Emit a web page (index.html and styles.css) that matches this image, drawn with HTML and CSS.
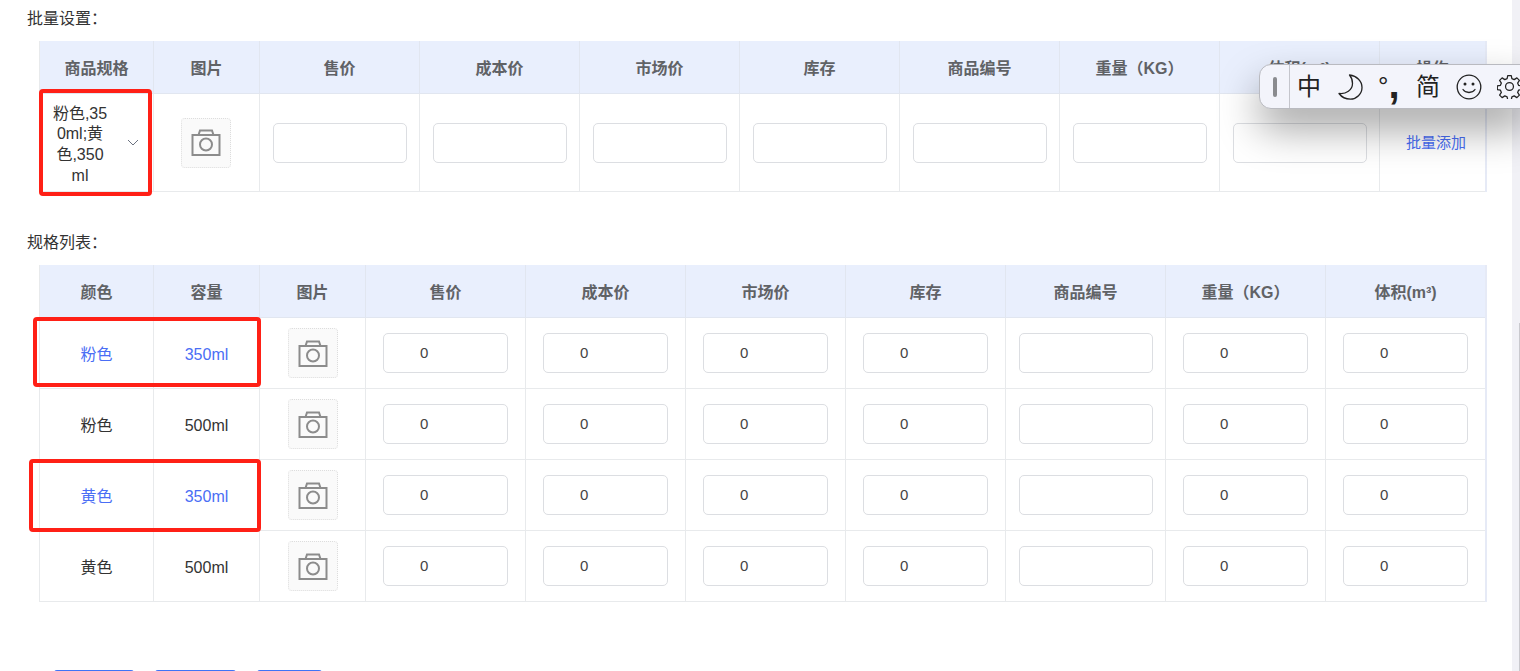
FILE: index.html
```html
<!DOCTYPE html>
<html lang="zh">
<head>
<meta charset="utf-8">
<title>批量设置</title>
<link rel="stylesheet" href="styles.css">
</head>
<body>
<div class="page">
  <main class="content">
    <div class="label first">批量设置：</div>
    <table class="grid">
      <colgroup><col class="c114"><col class="c106"><col class="c160"><col class="c160"><col class="c160"><col class="c160"><col class="c160"><col class="c160"><col class="c160"><col class="c105"></colgroup>
      <thead><tr><th>商品规格</th><th>图片</th><th>售价</th><th>成本价</th><th>市场价</th><th>库存</th><th>商品编号</th><th>重量（KG）</th><th>体积(m³)</th><th>操作</th></tr></thead>
      <tbody>
        <tr class="batch">
          <td><div class="select"><span class="select-text">粉色,350ml;黄色,350ml</span><svg class="chev" viewBox="0 0 12 7" width="12" height="7"><path d="M1 1l5 5 5-5" fill="none" stroke="#6b7280" stroke-width="1"/></svg></div></td>
          <td><div class="upload"><svg class="cam" viewBox="0 0 30 27"><use href="#camera"/></svg></div></td>
          <td><div class="field wide"></div></td>
          <td><div class="field wide"></div></td>
          <td><div class="field wide"></div></td>
          <td><div class="field wide"></div></td>
          <td><div class="field wide"></div></td>
          <td><div class="field wide"></div></td>
          <td><div class="field wide"></div></td>
          <td><a class="link">批量添加</a></td>
        </tr>
      </tbody>
    </table>

    <div class="label second">规格列表：</div>
    <table class="grid">
      <colgroup><col class="c114"><col class="c106"><col class="c106"><col class="c160"><col class="c160"><col class="c160"><col class="c160"><col class="c160"><col class="c160"><col class="c159"></colgroup>
      <thead><tr><th>颜色</th><th>容量</th><th>图片</th><th>售价</th><th>成本价</th><th>市场价</th><th>库存</th><th>商品编号</th><th>重量（KG）</th><th>体积(m³)</th></tr></thead>
      <tbody>
        <tr class="row hl"><td>粉色</td><td>350ml</td><td><div class="upload small"><svg class="cam" viewBox="0 0 30 27"><use href="#camera"/></svg></div></td><td><div class="field num">0</div></td><td><div class="field num">0</div></td><td><div class="field num">0</div></td><td><div class="field num">0</div></td><td><div class="field wide"></div></td><td><div class="field num">0</div></td><td><div class="field num">0</div></td></tr>
        <tr class="row"><td>粉色</td><td>500ml</td><td><div class="upload small"><svg class="cam" viewBox="0 0 30 27"><use href="#camera"/></svg></div></td><td><div class="field num">0</div></td><td><div class="field num">0</div></td><td><div class="field num">0</div></td><td><div class="field num">0</div></td><td><div class="field wide"></div></td><td><div class="field num">0</div></td><td><div class="field num">0</div></td></tr>
        <tr class="row hl"><td>黄色</td><td>350ml</td><td><div class="upload small"><svg class="cam" viewBox="0 0 30 27"><use href="#camera"/></svg></div></td><td><div class="field num">0</div></td><td><div class="field num">0</div></td><td><div class="field num">0</div></td><td><div class="field num">0</div></td><td><div class="field wide"></div></td><td><div class="field num">0</div></td><td><div class="field num">0</div></td></tr>
        <tr class="row"><td>黄色</td><td>500ml</td><td><div class="upload small"><svg class="cam" viewBox="0 0 30 27"><use href="#camera"/></svg></div></td><td><div class="field num">0</div></td><td><div class="field num">0</div></td><td><div class="field num">0</div></td><td><div class="field num">0</div></td><td><div class="field wide"></div></td><td><div class="field num">0</div></td><td><div class="field num">0</div></td></tr>
      </tbody>
    </table>

    <div class="actions">
      <button class="btn b80">上一步</button>
      <button class="btn b81">下一步</button>
      <button class="btn b65">提交</button>
    </div>
  </main>
  <div class="scrollbar"><div class="thumb"></div></div>
</div>

<div class="mark m1"></div>
<div class="mark m2"></div>
<div class="mark m3"></div>

<div class="ime">
  <div class="ime-grip"><span class="grip-bar"></span></div>
  <div class="ime-items">
    <span class="ime-zh">中</span>
    <svg class="ime-moon" viewBox="0 0 25 26" width="25" height="26"><path d="M11.500 1C19 2 24 7 24 13.500 24 20 18.500 25.200 12.500 25.200 7.500 25.200 3.500 23 1 19.500 8 20.500 14.500 16 14.500 9.500 14.500 6.300 13.500 3.300 11.500 1z" fill="none" stroke="#222" stroke-width="1.300" stroke-linejoin="round"/></svg>
    <span class="ime-punct"><i class="deg">°</i><b class="comma">,</b></span>
    <span class="ime-zh jian">简</span>
    <svg class="ime-smile" viewBox="0 0 26 26" width="26" height="26"><circle cx="13" cy="13" r="11.800" fill="none" stroke="#222" stroke-width="1.300"/><circle cx="9" cy="10" r="1.500" fill="#222"/><circle cx="17" cy="10" r="1.500" fill="#222"/><path d="M7 15.500c2.800 4 9.200 4 12 0" fill="none" stroke="#222" stroke-width="1.300" stroke-linecap="round"/></svg>
    <svg class="ime-gear" viewBox="0 0 24 24" width="25" height="25"><path d="M10.300 1.500h3.400l.6 3 2.200.9 2.600-1.700 2.400 2.400-1.700 2.600.9 2.200 3 .6v3.400l-3 .6-.9 2.200 1.700 2.600-2.400 2.400-2.600-1.700-2.200.9-.6 3h-3.400l-.6-3-2.200-.9-2.600 1.700-2.400-2.400 1.700-2.600-.9-2.200-3-.6v-3.400l3-.6.9-2.200-1.700-2.600 2.400-2.400 2.600 1.700 2.200-.9z" fill="none" stroke="#222" stroke-width="1.200" stroke-linejoin="round"/><circle cx="12" cy="12" r="3.800" fill="none" stroke="#222" stroke-width="1.200"/></svg>
  </div>
</div>

<svg class="defs" width="0" height="0">
  <symbol id="camera" viewBox="0 0 30 27">
    <path d="M1.500 6h27v20h-27zM7.500 6l1.500-4.500h12L22.500 6" fill="none" stroke="#8c8c8c" stroke-width="2"/>
    <circle cx="15" cy="15.500" r="6" fill="none" stroke="#8c8c8c" stroke-width="2"/>
  </symbol>
</svg>
</body>
</html>
```

FILE: styles.css
```css
* { box-sizing: border-box; }
html, body { margin: 0; height: 671px; overflow: hidden; background: #fff; }
body {
  font-family: "Liberation Sans", "Noto Sans CJK SC", sans-serif;
  color: #333;
  position: relative;
}
.page { display: flex; height: 671px; overflow: hidden; }
.content { flex: 1; padding-left: 27px; min-width: 0; }
.label { font-size: 16px; line-height: 20px; color: #333; }
.label.first { margin-top: 9px; }
.label.second { margin-top: 41px; }
.grid {
  margin: 12px 0 0 12px;
  width: 1448px;
  table-layout: fixed;
  border-collapse: separate;
  border-spacing: 0;
  border-left: 1px solid #e8eaec;
  border-right: 2px solid #e6eaf6;
}
.c105 { width: 105px; }
.c114 { width: 114px; }
.c106 { width: 106px; }
.c159 { width: 159px; }
.c160 { width: 160px; }
.grid th {
  height: 53px;
  background: #e9effd;
  color: #606266;
  font-size: 16px;
  font-weight: 700;
  text-align: center;
  border-right: 1px solid #e1e6f0;
  border-bottom: 1px solid #e1e6f0;
  padding: 0;
}
.grid td {
  padding: 0;
  text-align: center;
  vertical-align: middle;
  font-size: 16px;
  line-height: 20px;
  color: #333;
  border-right: 1px solid #e8eaec;
  border-bottom: 1px solid #e8eaec;
}
.grid th:last-child, .grid td:last-child { border-right: 0; }
.batch td { height: 98px; }
.row td { height: 71px; }
.row td:nth-child(-n+2) { padding-top: 3px; }
.row.hl td { color: #4a6ef5; }
.select {
  display: flex;
  align-items: center;
  padding-left: 11px;
}
.select-text {
  width: 58px;
  margin-top: 5px;
  font-size: 16px;
  line-height: 20.700px;
  word-break: break-all;
  text-align: center;
}
.chev { margin-left: 18px; }
.upload {
  width: 50px;
  height: 50px;
  margin: 0 auto;
  display: flex;
  align-items: center;
  justify-content: center;
  background: #fafafa;
  border: 1px dotted #ddd;
  border-radius: 4px;
}
.batch .upload { margin-left: 27px; }
.cam { width: 30px; height: 27px; display: block; }
.field {
  height: 40px;
  margin: 0 auto;
  background: #fff;
  border: 1px solid #dcdee2;
  border-radius: 5px;
}
.field.wide { width: 134px; }
.field.num {
  width: 125px;
  font-size: 15px;
  line-height: 38px;
  color: #444;
  text-align: left;
  padding-left: 36px;
}
.link { display: inline-block; margin-left: 7px; color: #4a6ef5; font-size: 15px; }
.actions { display: flex; gap: 21px; margin: 68px 0 0 27px; }
.btn {
  height: 36px;
  border: 0;
  border-radius: 3px;
  background: #3f74f7;
  color: #fff;
  font-size: 14px;
  padding: 0;
}
.b80 { width: 80px; }
.b81 { width: 81px; }
.b65 { width: 65px; }
.scrollbar { width: 8px; background: #f1f1f6; flex: none; }
.thumb { margin: 323px 0 0 7px; height: 348px; width: 1px; background: #c9c9ce; }
.mark {
  position: absolute;
  border: 4px solid #ff2016;
  border-radius: 4px;
  pointer-events: none;
}
.m1 { left: 39px; top: 89px; width: 113px; height: 107px; }
.m2 { left: 33px; top: 317px; width: 228px; height: 70px; }
.m3 { left: 29px; top: 459px; width: 232px; height: 73px; }
.ime {
  position: absolute;
  left: 1259px;
  top: 64px;
  width: 270px;
  height: 45px;
  display: flex;
  background: #f3f4fb;
  border: 1px solid #b9bac0;
  border-radius: 12px 0 0 12px;
  box-shadow: 0 20px 40px rgba(0,0,0,.36);
  color: #222;
}
.ime-grip {
  width: 30px;
  flex: none;
  display: flex;
  align-items: center;
  justify-content: center;
  border-right: 1px solid #c4c5cc;
}
.grip-bar { width: 4px; height: 20px; border-radius: 2px; background: #8a8b8f; }
.ime-items { display: flex; align-items: center; padding-left: 7px; }
.ime-zh { font-size: 24px; line-height: 30px; }
.ime-moon { margin-left: 17px; }
.ime-punct { margin-left: 15px; width: 24px; height: 30px; line-height: 30px; white-space: nowrap; display: flex; }
.deg { font-style: normal; font-size: 26px; line-height: 28px; }
.comma { font-size: 40px; line-height: 24px; font-weight: 700; }
.jian { margin-left: 14px; }
.ime-smile { margin-left: 16px; }
.ime-gear { margin-left: 15px; }
.defs { position: absolute; }
```
